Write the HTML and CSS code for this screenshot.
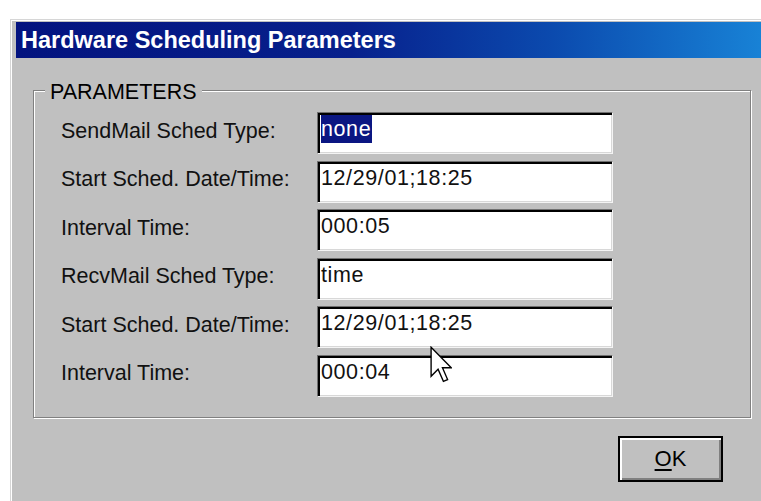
FILE: index.html
```html
<!DOCTYPE html>
<html lang="en">
<head>
<meta charset="utf-8">
<title>Hardware Scheduling Parameters</title>
<link rel="stylesheet" href="styles.css">
</head>
<body>
  <div class="window">
    <div class="titlebar">Hardware Scheduling Parameters</div>
    <div class="client">
      <div class="group">
        <div class="legend">PARAMETERS</div>
        <div class="rows">
          <label class="lbl">SendMail Sched Type:</label>
          <div class="edit"><span class="sel">none</span></div>
          <label class="lbl">Start Sched. Date/Time:</label>
          <div class="edit">12/29/01;18:25</div>
          <label class="lbl">Interval Time:</label>
          <div class="edit">000:05</div>
          <label class="lbl">RecvMail Sched Type:</label>
          <div class="edit">time</div>
          <label class="lbl">Start Sched. Date/Time:</label>
          <div class="edit">12/29/01;18:25</div>
          <label class="lbl">Interval Time:</label>
          <div class="edit">000:04</div>
        </div>
      </div>
      <div class="actions">
        <button class="btn" type="button"><u>O</u>K</button>
      </div>
    </div>
  </div>

  <!-- mouse pointer resting over the form -->
  <svg class="pointer" width="22" height="37" viewBox="0 0 12 20" aria-hidden="true">
    <path d="M0.6 0.6 L0.6 16.4 L4.4 12.6 L7.3 19.2 L9.6 18.2 L6.8 11.8 L11.6 11.8 Z"
          fill="#fff" stroke="#000" stroke-width="0.75" stroke-linejoin="miter"/>
  </svg>
</body>
</html>
```

FILE: styles.css
```css
html, body {
  margin: 0;
  height: 100%;
}

body {
  position: relative;
  overflow: hidden;
  background: #ffffff;
  font-family: "Liberation Sans", Arial, sans-serif;
  color: #000;
}

/* dialog frame */
.window {
  box-sizing: border-box;
  height: 482px;
  margin: 19px 0 0 10px;
  padding: 2px 0 0 5px;
  background: #c0c0c0;
  border-top: 1px solid #d6d6d6;
  border-left: 1px solid #d6d6d6;
  box-shadow: inset 1px 1px 0 #ffffff;
}

.titlebar {
  height: 36px;
  line-height: 36px;
  padding-left: 5px;
  color: #fff;
  font-size: 23.5px;
  font-weight: bold;
  white-space: nowrap;
  background: linear-gradient(to right, #03137f 0%, #07208c 45%, #0b4aae 72%, #1882d6 100%);
}

.client {
  width: 718px;
  padding: 32px 0 0 17px;
}

/* etched group box */
.group {
  border: 1px solid #808080;
  box-shadow: inset 1px 1px 0 #ffffff, 1px 1px 0 #ffffff;
  padding: 0 0 20px 27px;
}

.legend {
  width: fit-content;
  margin: -11px 0 0 -16px;
  padding: 0 5px;
  background: #c0c0c0;
  font-size: 21.5px;
  line-height: 24px;
}

.rows {
  display: grid;
  grid-template-columns: 256px 296px;
  grid-auto-rows: 42px;
  row-gap: 6.6px;
  margin-top: 8px;
  align-items: center;
}

.lbl {
  font-size: 21.5px;
  padding-bottom: 4px;
  white-space: nowrap;
  color: #111;
}

/* sunken edit box */
.edit {
  box-sizing: border-box;
  height: 42px;
  padding: 3px 0 0 3px;
  background: #fff;
  border-top: 1px solid #707070;
  border-left: 1px solid #707070;
  border-right: 1px solid #f4f4f4;
  border-bottom: 1px solid #f4f4f4;
  box-shadow: inset 2px 2px 0 #000, inset -1px -1px 0 #d8d8d8;
  font-size: 21.5px;
  line-height: 26px;
  letter-spacing: 0.6px;
  white-space: nowrap;
  color: #111;
}

.sel {
  display: inline-block;
  margin-top: -2px;
  padding: 1px 1px 1px 0;
  background: #0a1682;
  color: #fff;
}

.actions {
  display: flex;
  justify-content: flex-end;
  padding: 18px 28px 0 0;
}

.btn {
  box-sizing: border-box;
  width: 105px;
  height: 46px;
  padding: 0;
  background: #c0c0c0;
  border: 2px solid #000;
  box-shadow: inset 2px 2px 0 #ffffff, inset -2px -2px 0 #808080;
  font-family: "Liberation Sans", Arial, sans-serif;
  font-size: 22px;
  color: #000;
}

.btn u {
  text-underline-offset: 3px;
  text-decoration-thickness: 2px;
}

.pointer {
  position: absolute;
  left: 430px;
  top: 346px;
}
```
